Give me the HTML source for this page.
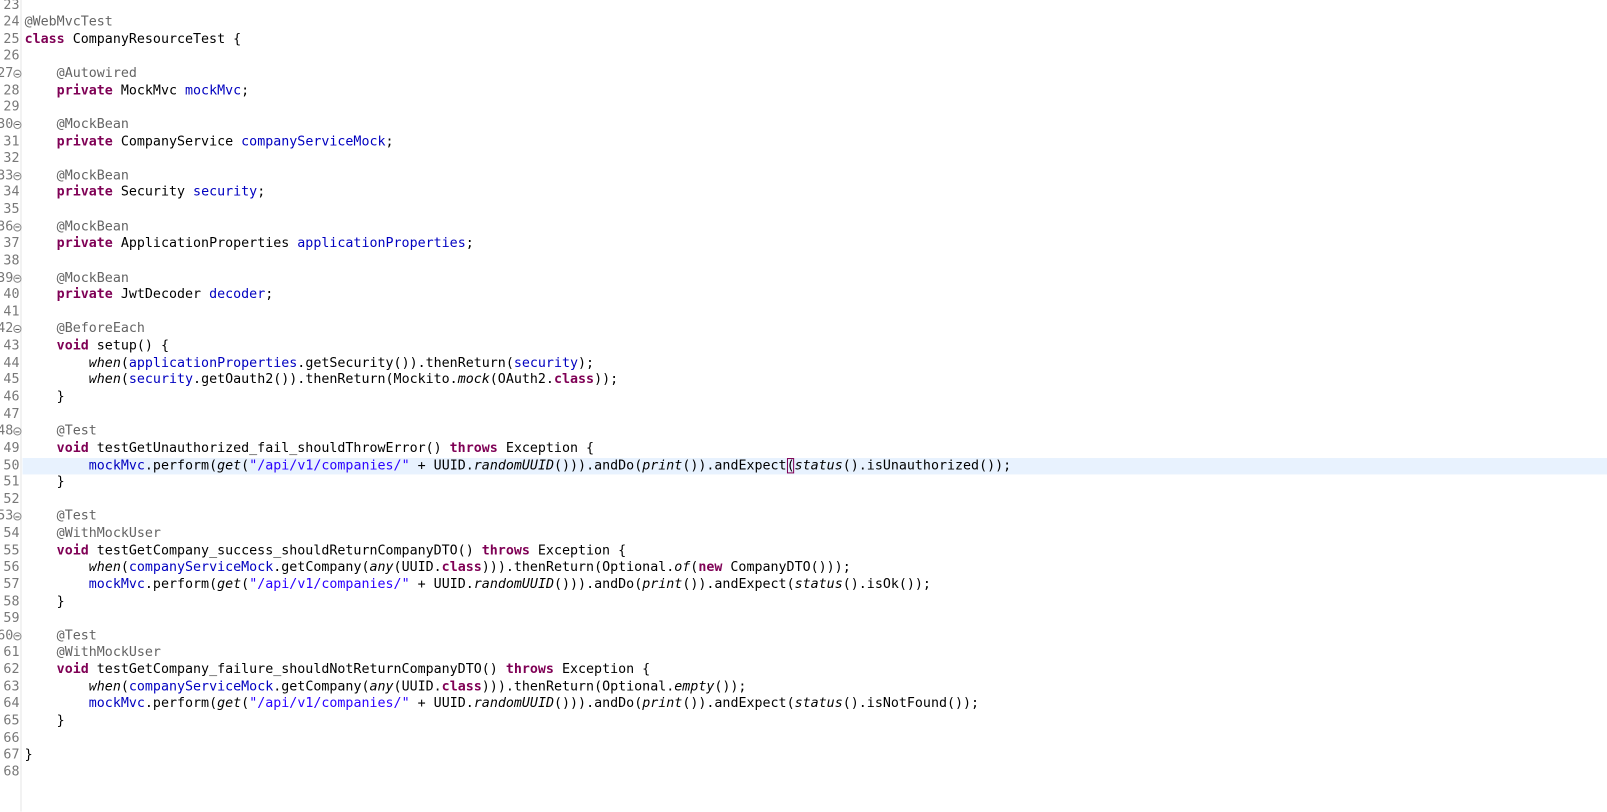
<!DOCTYPE html>
<html><head><meta charset="utf-8"><style>
html,body{margin:0;padding:0;background:#fff;width:1607px;height:792px;overflow:hidden}
body{font-family:"DejaVu Sans Mono","Liberation Mono",monospace;font-size:13px;color:#000}
#root{position:absolute;left:0;top:0;width:1570px;height:780px;transform:scale(1.0247);transform-origin:0 0}
.l{position:absolute;left:0;width:1570px;height:16.63px;line-height:16.63px;white-space:pre}
.n{position:absolute;left:-20px;width:39px;text-align:right;color:#787878}
.n.f{width:33px}
.fi{position:absolute;left:13px;top:4px;width:6px;height:6px;border:1px solid #8a8a8a;border-radius:50%;font-size:0}
.fi:after{content:"";position:absolute;left:1px;top:2.5px;width:4px;height:1px;background:#555}
.c{position:absolute;left:24px}
.hl{background:#e8f2fe}
.k{color:#7f0055;font-weight:bold}
.a{color:#646464}
.v{color:#0000c0}
.s{color:#2a00ff}
.i{font-style:italic}
.g{position:absolute;left:20px;top:0;width:1px;height:792px;background:#e6e6e6}
.br{outline:1px solid #7f0055;outline-offset:-1px}
</style></head><body>
<div id="root">
<div class="g"></div>
<div id="w" style="position:absolute;left:0;top:-2.5px">
<div class="l" style="top:0"><span class="n">23</span></div>
<div class="l" style="top:16.63px"><span class="n">24</span><span class="c"><span class="a">@WebMvcTest</span></span></div>
<div class="l" style="top:33.26px"><span class="n">25</span><span class="c"><span class="k">class</span> CompanyResourceTest {</span></div>
<div class="l" style="top:49.89px"><span class="n">26</span></div>
<div class="l" style="top:66.52px"><span class="n f">27</span><span class="fi"></span><span class="c">    <span class="a">@Autowired</span></span></div>
<div class="l" style="top:83.15px"><span class="n">28</span><span class="c">    <span class="k">private</span> MockMvc <span class="v">mockMvc</span>;</span></div>
<div class="l" style="top:99.78px"><span class="n">29</span></div>
<div class="l" style="top:116.41px"><span class="n f">30</span><span class="fi"></span><span class="c">    <span class="a">@MockBean</span></span></div>
<div class="l" style="top:133.04px"><span class="n">31</span><span class="c">    <span class="k">private</span> CompanyService <span class="v">companyServiceMock</span>;</span></div>
<div class="l" style="top:149.67px"><span class="n">32</span></div>
<div class="l" style="top:166.3px"><span class="n f">33</span><span class="fi"></span><span class="c">    <span class="a">@MockBean</span></span></div>
<div class="l" style="top:182.93px"><span class="n">34</span><span class="c">    <span class="k">private</span> Security <span class="v">security</span>;</span></div>
<div class="l" style="top:199.56px"><span class="n">35</span></div>
<div class="l" style="top:216.19px"><span class="n f">36</span><span class="fi"></span><span class="c">    <span class="a">@MockBean</span></span></div>
<div class="l" style="top:232.82px"><span class="n">37</span><span class="c">    <span class="k">private</span> ApplicationProperties <span class="v">applicationProperties</span>;</span></div>
<div class="l" style="top:249.45px"><span class="n">38</span></div>
<div class="l" style="top:266.08px"><span class="n f">39</span><span class="fi"></span><span class="c">    <span class="a">@MockBean</span></span></div>
<div class="l" style="top:282.71px"><span class="n">40</span><span class="c">    <span class="k">private</span> JwtDecoder <span class="v">decoder</span>;</span></div>
<div class="l" style="top:299.34px"><span class="n">41</span></div>
<div class="l" style="top:315.97px"><span class="n f">42</span><span class="fi"></span><span class="c">    <span class="a">@BeforeEach</span></span></div>
<div class="l" style="top:332.6px"><span class="n">43</span><span class="c">    <span class="k">void</span> setup() {</span></div>
<div class="l" style="top:349.23px"><span class="n">44</span><span class="c">        <span class="i">when</span>(<span class="v">applicationProperties</span>.getSecurity()).thenReturn(<span class="v">security</span>);</span></div>
<div class="l" style="top:365.86px"><span class="n">45</span><span class="c">        <span class="i">when</span>(<span class="v">security</span>.getOauth2()).thenReturn(Mockito.<span class="i">mock</span>(OAuth2.<span class="k">class</span>));</span></div>
<div class="l" style="top:382.49px"><span class="n">46</span><span class="c">    }</span></div>
<div class="l" style="top:399.12px"><span class="n">47</span></div>
<div class="l" style="top:415.75px"><span class="n f">48</span><span class="fi"></span><span class="c">    <span class="a">@Test</span></span></div>
<div class="l" style="top:432.38px"><span class="n">49</span><span class="c">    <span class="k">void</span> testGetUnauthorized_fail_shouldThrowError() <span class="k">throws</span> Exception {</span></div>
<div class="l" style="top:449.01px"><span class="n">50</span><div class="hl" style="position:absolute;left:22px;right:0;top:0;bottom:0"></div><span class="c">        <span class="v">mockMvc</span>.perform(<span class="i">get</span>(<span class="s">"/api/v1/companies/"</span> + UUID.<span class="i">randomUUID</span>())).andDo(<span class="i">print</span>()).andExpect<span class="br">(</span><span class="i">status</span>().isUnauthorized());</span></div>
<div class="l" style="top:465.64px"><span class="n">51</span><span class="c">    }</span></div>
<div class="l" style="top:482.27px"><span class="n">52</span></div>
<div class="l" style="top:498.9px"><span class="n f">53</span><span class="fi"></span><span class="c">    <span class="a">@Test</span></span></div>
<div class="l" style="top:515.53px"><span class="n">54</span><span class="c">    <span class="a">@WithMockUser</span></span></div>
<div class="l" style="top:532.16px"><span class="n">55</span><span class="c">    <span class="k">void</span> testGetCompany_success_shouldReturnCompanyDTO() <span class="k">throws</span> Exception {</span></div>
<div class="l" style="top:548.79px"><span class="n">56</span><span class="c">        <span class="i">when</span>(<span class="v">companyServiceMock</span>.getCompany(<span class="i">any</span>(UUID.<span class="k">class</span>))).thenReturn(Optional.<span class="i">of</span>(<span class="k">new</span> CompanyDTO()));</span></div>
<div class="l" style="top:565.42px"><span class="n">57</span><span class="c">        <span class="v">mockMvc</span>.perform(<span class="i">get</span>(<span class="s">"/api/v1/companies/"</span> + UUID.<span class="i">randomUUID</span>())).andDo(<span class="i">print</span>()).andExpect(<span class="i">status</span>().isOk());</span></div>
<div class="l" style="top:582.05px"><span class="n">58</span><span class="c">    }</span></div>
<div class="l" style="top:598.68px"><span class="n">59</span></div>
<div class="l" style="top:615.31px"><span class="n f">60</span><span class="fi"></span><span class="c">    <span class="a">@Test</span></span></div>
<div class="l" style="top:631.94px"><span class="n">61</span><span class="c">    <span class="a">@WithMockUser</span></span></div>
<div class="l" style="top:648.57px"><span class="n">62</span><span class="c">    <span class="k">void</span> testGetCompany_failure_shouldNotReturnCompanyDTO() <span class="k">throws</span> Exception {</span></div>
<div class="l" style="top:665.2px"><span class="n">63</span><span class="c">        <span class="i">when</span>(<span class="v">companyServiceMock</span>.getCompany(<span class="i">any</span>(UUID.<span class="k">class</span>))).thenReturn(Optional.<span class="i">empty</span>());</span></div>
<div class="l" style="top:681.83px"><span class="n">64</span><span class="c">        <span class="v">mockMvc</span>.perform(<span class="i">get</span>(<span class="s">"/api/v1/companies/"</span> + UUID.<span class="i">randomUUID</span>())).andDo(<span class="i">print</span>()).andExpect(<span class="i">status</span>().isNotFound());</span></div>
<div class="l" style="top:698.46px"><span class="n">65</span><span class="c">    }</span></div>
<div class="l" style="top:715.09px"><span class="n">66</span></div>
<div class="l" style="top:731.72px"><span class="n">67</span><span class="c">}</span></div>
<div class="l" style="top:748.35px"><span class="n">68</span></div>
</div>
</div>
</body></html>
